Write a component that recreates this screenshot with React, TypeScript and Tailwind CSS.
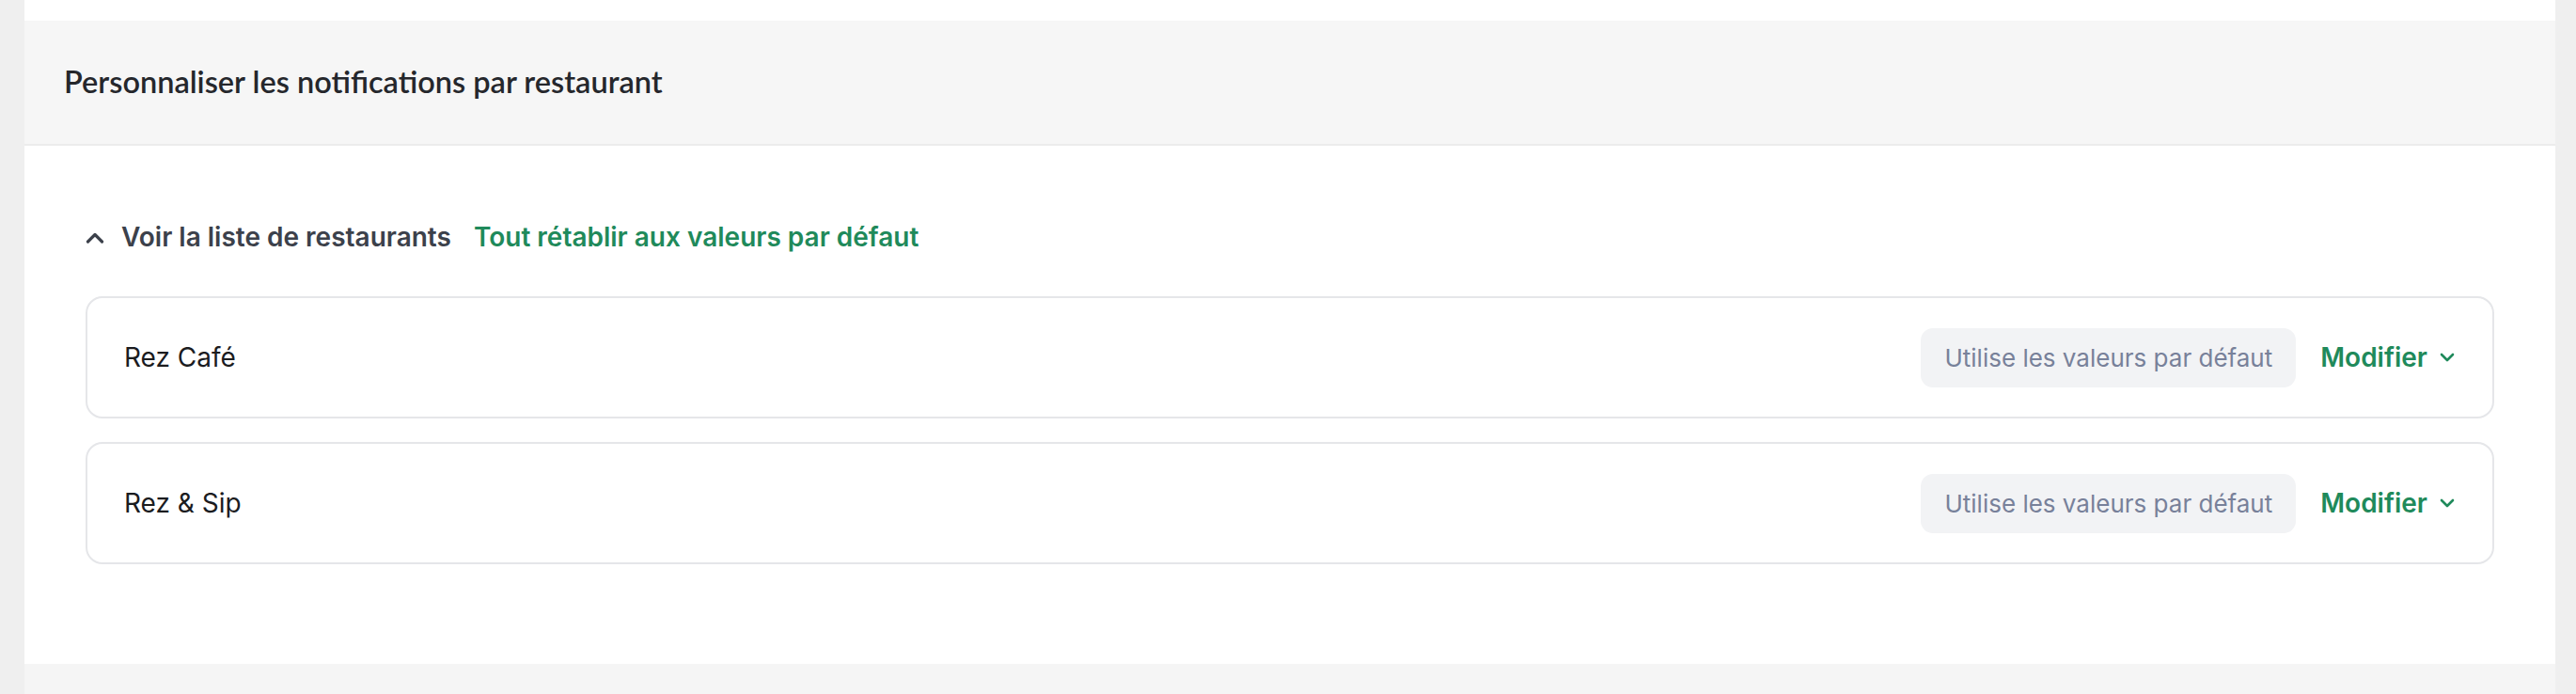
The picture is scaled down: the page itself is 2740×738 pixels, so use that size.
import { useState } from "react";

const restaurants = ["Rez Café", "Rez & Sip"];

function ChevronUp() {
  return (
    <svg width="20" height="13" viewBox="0 0 20 13" fill="none" className="shrink-0">
      <path d="M2.5 11L10 3.5L17.5 11" stroke="#3c414b" strokeWidth="3.2" strokeLinecap="round" strokeLinejoin="round" />
    </svg>
  );
}

function ChevronDown() {
  return (
    <svg width="16" height="10" viewBox="0 0 16 10" fill="none" className="shrink-0">
      <path d="M2 2L8 8L14 2" stroke="#1f8a5b" strokeWidth="2.6" strokeLinecap="round" strokeLinejoin="round" />
    </svg>
  );
}

function RestaurantRow({ name }: { name: string }) {
  return (
    <div className="flex h-[130px] items-center justify-between rounded-[18px] border-2 border-[#e5e6e9] bg-white pl-[39px] pr-[40px]">
      <span className="text-[28px] text-[#1b1c1f]">{name}</span>
      <div className="flex items-center gap-[26px]">
        <span className="flex h-[63px] items-center rounded-[13px] bg-[#f2f3f5] px-[25px] text-[26px] text-[#78819a]">
          Utilise les valeurs par défaut
        </span>
        <button className="flex items-center gap-[13px] text-[28px] font-semibold text-[#1f8a5b]">
          Modifier
          <ChevronDown />
        </button>
      </div>
    </div>
  );
}

export default function App() {
  const [open] = useState(true);

  return (
    <div className="flex min-h-[738px] flex-col bg-[#efefef] pl-[26px] pr-[22px] font-['Inter',sans-serif]">
      <div className="h-[22px] bg-white" />
      <div className="flex h-[133px] items-center border-b-2 border-[#ececec] bg-[#f6f6f6] pl-[42px]">
        <h2 className="font-['Lato',sans-serif] text-[32.5px] font-semibold text-[#25272c]">
          Personnaliser les notifications par restaurant
        </h2>
      </div>
      <div className="bg-white px-[65px] pb-[106px] pt-[80px]">
        <div className="flex h-[34px] items-center">
          <ChevronUp />
          <span className="ml-[18px] text-[28px] font-semibold text-[#3c414b]">Voir la liste de restaurants</span>
          <button className="ml-[24px] text-[28px] font-semibold text-[#1f8a5b]">
            Tout rétablir aux valeurs par défaut
          </button>
        </div>
        {open && (
          <div className="mt-[46px] flex flex-col gap-[25px]">
            {restaurants.map((r) => (
              <RestaurantRow key={r} name={r} />
            ))}
          </div>
        )}
      </div>
      <div className="flex-1 bg-[#f5f5f5]" />
    </div>
  );
}
